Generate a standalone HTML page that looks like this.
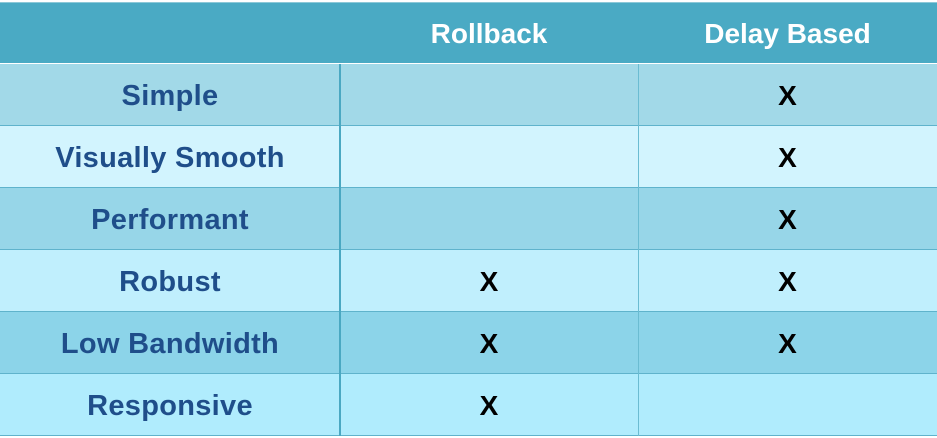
<!DOCTYPE html><html><head><style>
body{margin:0;width:937px;height:436px;overflow:hidden;font-family:"Liberation Sans",sans-serif;font-weight:bold;background:#fff}
.h{position:absolute;left:0;top:2px;width:937px;height:60px;background:#4aaac4;border-top:1px solid #8cc8d8}
.h div{position:absolute;top:0;line-height:62px;color:#fff;font-size:28px;font-family:"Liberation Sans",sans-serif;font-weight:bold;text-align:center}
.r{position:absolute;left:0;width:937px;height:61px;border-bottom:1px solid #5fb3cc}
.r div{position:absolute;top:0;line-height:64px;text-align:center}
.a{left:0;width:340px;color:#1f4e8a;font-size:29px;letter-spacing:0.3px}
.b{left:340px;width:298px;font-size:28px;color:#000}
.c{left:638px;width:299px;font-size:28px;color:#000}
.v1{position:absolute;left:339px;top:64px;width:2px;height:372px;background:#4aa8c2}
.v2{position:absolute;left:638px;top:64px;width:1px;height:372px;background:#6bbcd2}
</style></head><body>
<div class="h"><div style="left:340px;width:298px">Rollback</div><div style="left:638px;width:299px">Delay Based</div></div>
<div class="r" style="top:64px;background:#a2d9e8"><div class="a">Simple</div><div class="c">X</div></div>
<div class="r" style="top:126px;background:#d2f4fe"><div class="a">Visually Smooth</div><div class="c">X</div></div>
<div class="r" style="top:188px;background:#97d6e8"><div class="a">Performant</div><div class="c">X</div></div>
<div class="r" style="top:250px;background:#c0effd"><div class="a">Robust</div><div class="b">X</div><div class="c">X</div></div>
<div class="r" style="top:312px;background:#8cd4e9"><div class="a">Low Bandwidth</div><div class="b">X</div><div class="c">X</div></div>
<div class="r" style="top:374px;background:#b0ecfd"><div class="a">Responsive</div><div class="b">X</div></div>
<div class="v1"></div><div class="v2"></div>
</body></html>
